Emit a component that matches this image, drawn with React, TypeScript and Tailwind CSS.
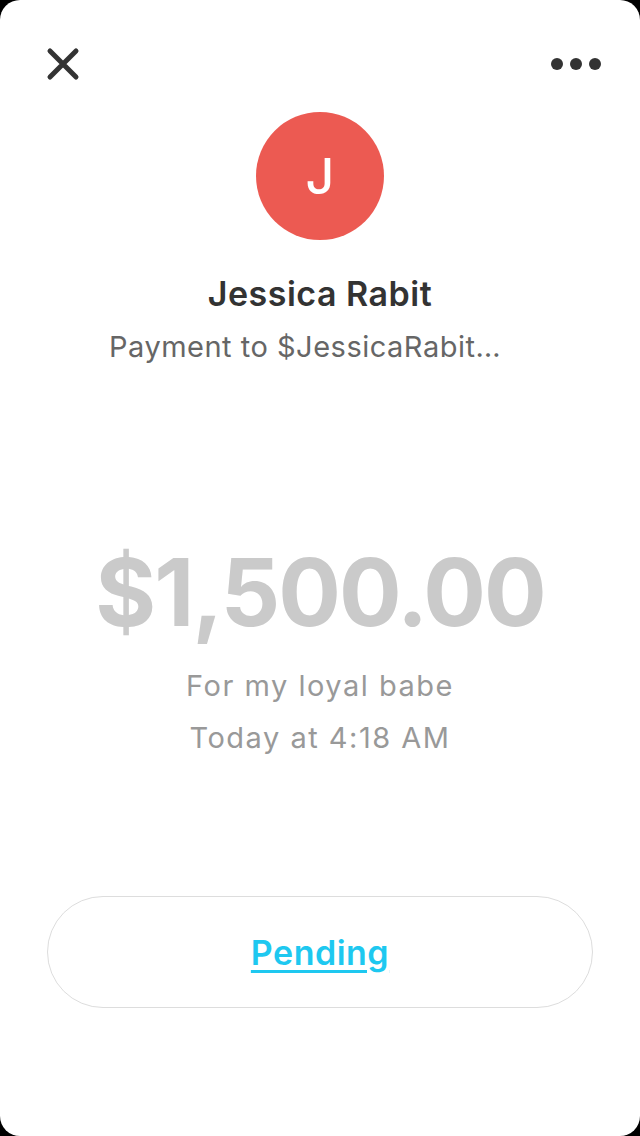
export default function App() {
  return (
    <div className="min-h-screen w-[640px] bg-black">
      <div
        className="flex h-[1136px] w-[640px] flex-col items-center rounded-[20px] bg-white px-[47px] pt-[48px]"
        style={{ fontFamily: "Inter, 'Open Sans', sans-serif" }}
      >
        <div className="flex h-[32px] w-full items-center justify-between">
          <svg width="34" height="34" viewBox="0 0 34 34" className="-ml-[1px]">
            <path d="M4 4 L30 30 M30 4 L4 30" stroke="#333333" strokeWidth="5" strokeLinecap="round" />
          </svg>
          <div className="mr-[-8px] flex items-center gap-[7px]">
            <span className="h-[12px] w-[12px] rounded-full bg-[#333333]" />
            <span className="h-[12px] w-[12px] rounded-full bg-[#333333]" />
            <span className="h-[12px] w-[12px] rounded-full bg-[#333333]" />
          </div>
        </div>

        <div className="mt-[32px] flex h-[128px] w-[128px] items-center justify-center rounded-full bg-[#ec5a52]">
          <span className="text-[50px] font-medium leading-none text-white">J</span>
        </div>

        <div className="mt-[33px] text-[34px] font-semibold leading-[42px] tracking-[0.5px] text-[#333333]">Jessica Rabit</div>
        <div className="mt-[14px] pr-[30px] text-[29px] leading-[36px] tracking-[0.5px] text-[#666666]">Payment to $JessicaRabit…</div>

        <div className="mt-[171px] text-[93px] font-bold leading-[112px] tracking-[-2px] text-[#cacaca]">$1,500.00</div>
        <div className="mt-[20px] text-[29px] leading-[36px] tracking-[1.5px] text-[#999999]">For my loyal babe</div>
        <div className="mt-[16px] text-[29px] leading-[36px] tracking-[1.5px] text-[#999999]">Today at 4:18 AM</div>

        <div className="mt-[140px] flex h-[112px] w-full items-center justify-center rounded-full border border-[#dddddd]">
          <span className="text-[34px] font-semibold tracking-[0.5px] text-[#1ec8f0] underline decoration-[3px] underline-offset-[5px]">Pending</span>
        </div>
      </div>
    </div>
  );
}
